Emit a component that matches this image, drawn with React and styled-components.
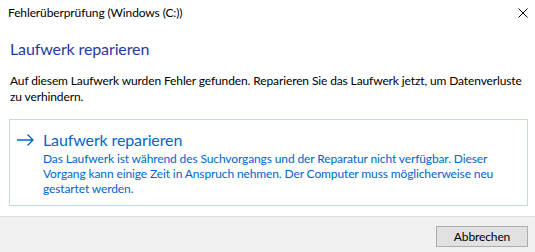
import styled, { createGlobalStyle } from 'styled-components'

const GlobalStyle = createGlobalStyle`
  html, body {
    margin: 0;
    padding: 0;
    background: #fff;
  }
  body {
    font-family: Lato, 'Noto Sans', sans-serif;
    font-size: 12px;
    letter-spacing: -0.12px;
    color: #000;
  }
`

const Window = styled('div')`
  width: 535px;
  height: 252px;
  display: flex;
  flex-direction: column;
  background: #fff;
  overflow: hidden;
`

const TitleBar = styled('div')`
  height: 30px;
  display: flex;
  justify-content: space-between;
  align-items: flex-start;
  padding: 5px 7px 0 8px;
  box-sizing: border-box;
  line-height: 16px;
`

const CloseButton = styled('div')`
  width: 10px;
  height: 10px;
  margin-top: 3px;
  display: flex;
`

const Content = styled('div')`
  padding: 8px 7px 0 9px;
`

const Heading = styled('h1')`
  margin: 0 0 0 1px;
  font-size: 16px;
  font-weight: 400;
  line-height: 22px;
  color: #1f3c9e;
`

const Body = styled('p')`
  margin: 13px 0 0 1px;
  line-height: 16px;
`

const CommandLink = styled('div')`
  margin-top: 14px;
  border: 1px solid #c3d9ee;
  padding: 10px 8px 9px 7px;
  display: grid;
  grid-template-columns: 17px 1fr;
  column-gap: 9px;
  color: #0066cc;
`

const Arrow = styled('div')`
  display: flex;
  align-items: center;
  height: 20px;
`

const LinkTitle = styled('div')`
  font-size: 16px;
  line-height: 20px;
`

const LinkNote = styled('div')`
  grid-column: 2;
  margin-top: 1px;
  line-height: 15px;
`

const Footer = styled('div')`
  margin-top: auto;
  height: 36px;
  box-sizing: border-box;
  border-top: 1px solid #dfdfdf;
  background: #f0f0f0;
  display: flex;
  justify-content: flex-end;
  align-items: flex-start;
  padding: 9px 7px 0 0;
`

const Button = styled('button')`
  width: 92px;
  height: 21px;
  box-sizing: border-box;
  border: 1px solid #adadad;
  background: #e1e1e1;
  font-family: inherit;
  font-size: 12px;
  letter-spacing: inherit;
  color: #000;
  padding: 0;
  line-height: 19px;
`

export default function App () {
  return (
    <Window>
      <GlobalStyle />
      <TitleBar>
        <span>Fehlerüberprüfung (Windows (C:))</span>
        <CloseButton>
          <svg width='10' height='10' viewBox='0 0 10 10'>
            <path d='M0.5 0.5 L9.5 9.5 M9.5 0.5 L0.5 9.5' stroke='#000' strokeWidth='1' fill='none' />
          </svg>
        </CloseButton>
      </TitleBar>
      <Content>
        <Heading>Laufwerk reparieren</Heading>
        <Body>
          Auf diesem Laufwerk wurden Fehler gefunden. Reparieren Sie das Laufwerk jetzt, um Datenverluste zu verhindern.
        </Body>
        <CommandLink>
          <Arrow>
            <svg width='17' height='12' viewBox='0 0 17 12'>
              <path d='M0 6 H16 M10.5 0.5 L16 6 L10.5 11.5' stroke='#0066cc' strokeWidth='1.3' fill='none' />
            </svg>
          </Arrow>
          <LinkTitle>Laufwerk reparieren</LinkTitle>
          <LinkNote>
            Das Laufwerk ist während des Suchvorgangs und der Reparatur nicht verfügbar. Dieser Vorgang kann einige Zeit in Anspruch nehmen. Der Computer muss möglicherweise neu gestartet werden.
          </LinkNote>
        </CommandLink>
      </Content>
      <Footer>
        <Button>Abbrechen</Button>
      </Footer>
    </Window>
  )
}
